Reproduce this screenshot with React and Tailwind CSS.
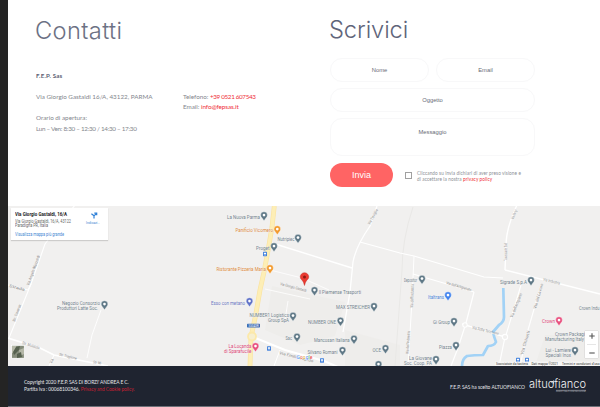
const GREY = '#5f7886';

const places = [
  { x: 264, y: 216, lines: [['La Nuova Parma', 227, 260, 218.5]] },
  { x: 277.3, y: 230, c: '#f29a2e', t: '#dd8a3c', lines: [['Panificio Vicomero', 235.5, 273, 232.2]] },
  { x: 298, y: 238.5, lines: [['Nutripiec', 277.5, 294.5, 241]] },
  { x: 274, y: 247, lines: [['Proget', 256, 269.5, 249.5]] },
  { x: 270, y: 269, c: '#f29a2e', t: '#dd8a3c', lines: [['Ristorante Pizzeria Maria', 216.5, 266, 270.5]] },
  { x: 314.5, y: 291, lines: [['Il Piemense Trasporti', 318.7, 361, 293.5]] },
  { x: 249.5, y: 302, c: '#5f72c8', t: '#6b78c0', lines: [['Esso con metano', 211, 245, 304.7]] },
  { x: 293, y: 316.5, lines: [['NUMBER1 Logistics', 249.5, 289, 317], ['Group SpA', 268, 289, 321.8]] },
  { x: 340.5, y: 321.5, lines: [['NUMBER ONE', 308, 336, 323.8]] },
  { x: 374, y: 307, lines: [['MAX STREICHER', 336, 370, 309]] },
  { x: 297, y: 337.5, lines: [['Sac', 285.5, 292, 340.2]] },
  { x: 354, y: 339.5, lines: [['Mancosan Italiana', 314, 349.7, 342.2]] },
  { x: 342.5, y: 351, lines: [['Silvano Romani', 307.5, 337.5, 353.8]] },
  { x: 385.5, y: 349, lines: [['OCE', 372.5, 381, 351.7]] },
  { x: 255.5, y: 347, c: '#e8517f', t: '#dc4476', lines: [['La Locanda', 228.5, 251.3, 348.3], ['di Sparafucile', 224, 251.5, 353]] },
  { x: 378.5, y: 365, lines: [] },
  { x: 422, y: 279.5, lines: [['Depositor', 404, 417, 282]] },
  { x: 531, y: 281, lines: [['Sigrade S.p.A', 500, 527, 283.8]] },
  { x: 448, y: 296, c: '#4384ee', t: '#4b87d8', lines: [['Italtrans', 428, 444, 298.7]] },
  { x: 454, y: 322, lines: [['Gi Group', 433, 450, 324.3]] },
  { x: 456, y: 346, lines: [['Piazza', 439, 452, 348.7]] },
  { x: 436, y: 360, lines: [['La Giovane', 409, 432, 360], ['Soc. Coop. PA', 404, 432, 364.5]] },
  { x: 559, y: 321, c: '#e8517f', t: '#dc4476', lines: [['Crown', 542, 555, 323.3]] },
  { x: 575, y: 351, lines: [['Lui - Lamiere', 545.5, 571, 352], ['Speciali Inox', 545.5, 571, 356.6]] },
  { x: 104.5, y: 305, lines: [['Negozio Consorzio', 62, 100, 305], ['Produttori Latte Soc.', 57, 98, 309.8]] },
];

const roads = [
  ['M75 205 L45 244 L31 284 L9 338', 1.1],
  ['M8 285 L28 290 L31 284', 1.2],
  ['M8 338 L40 348 L54 355 L108 366', 1.7],
  ['M54 355 L49 366', 1],
  ['M101 310 L92 335 L87 358', 0.9],
  ['M272 243 L352 268', 1.4],
  ['M377 206 L370 226 Q356 246 353 262 L350 292 L343 332', 1.3],
  ['M360 242 L400 253 L414 256 L484 277 L503 278', 1.2],
  ['M414 256 L412 300 L408 366', 1],
  ['M413 274 L474 292', 1.2],
  ['M474 292 L466 323 L458 348 L451 366', 1.2],
  ['M462 324 L505 337 L499 366', 1.2],
  ['M517 205 Q506 228 506 246 L505 270', 1.4],
  ['M505 270 L600 294', 1.4],
  ['M521 285 L506 335', 1.1],
  ['M541 285 L528 330 L520 366', 1.1],
  ['M253 337 L285 350 L324 361 L345 370', 2],
  ['M265 289 L310 299 M288 301 L285 320', 0.8],
  ['M280 350 L274 366', 1],
  ['M270 270 L302 278 L329 290', 0.8],
];

const streetNames = [
  ['Via Angelo Mazzoldi', 29, 286, -70, 32],
  ['Strada', 9, 287, 14, 16],
  ['Str. Traversa', 15, 322, -70, 18],
  ['Str. Moletolo', 22, 344, 17, 18],
  ['Str. Traglione', 59, 355.5, 14, 18],
  ['Str. Mi', 93, 363.2, 10, 8],
  ['Via', 52, 364, -70, 5],
  ['Via Treviglio', 370, 225, -62, 17],
  ['Via Giorgio Gastaldi', 280, 285, 15, 27],
  ['Via Emilio Lepido', 279, 354, 14, 35],
  ['Via Parigi', 513.5, 219.5, -68, 10],
  ['Traversante Sud', 507, 261, -90, 18],
  ['Via dell’Artigianato', 446, 284, 16, 26],
  ['Via Sofia Tecchioni', 472, 328.5, 14, 27],
  ['Via Industria', 543, 280.5, 14, 17],
  ['Via dell’Industria', 413, 308, -88, 24],
  ['Via dell’Industria', 408.5, 354, -86, 23],
  ['Via dell’Artigiano', 512.5, 318, -68, 26],
  ['Via del Lavoro', 536, 309, -74, 26],
  ['Via Ghiretti', 523, 355, -74, 25],
];

function Pin({ x, y, c = GREY }) {
  return (
    <g transform={`translate(${x} ${y})`}>
      <path d="M0 4.8 L-2 1.9 Q-3.4 .8 -3.4 -.9 A3.4 3.4 0 1 1 3.4 -.9 Q3.4 .8 2 1.9 Z" fill={c} stroke="#fff" strokeWidth=".4" />
      <circle cy="-.9" r="1.35" fill="#fff" />
    </g>
  );
}

function Bus({ x, y }) {
  return (
    <g transform={`translate(${x} ${y})`}>
      <rect x="-2" y="-2.2" width="4" height="4.4" rx=".6" fill="#3f7fdc" />
      <rect x="-1.1" y="-1.2" width="2.2" height="1.5" fill="#fff" />
      <path d="M-1 1.2h.6M.4 1.2h.6" stroke="#fff" strokeWidth=".6" />
    </g>
  );
}

function MapLabel({ text, x1, x2, y, fill, size = 5.2 }) {
  return (
    <text x={x1} y={y} textLength={x2 - x1} lengthAdjust="spacingAndGlyphs" fill={fill} fontSize={size} stroke="#f6f6f6" strokeWidth=".4" paintOrder="stroke">
      {text}
    </text>
  );
}

function MapDrawing() {
  return (
    <svg viewBox="8 206 592 160" className="block h-[160px] w-full font-['Roboto',sans-serif]">
      <rect x="8" y="206" width="592" height="160" fill="#f1f0ef" />
      <path d="M272 286 L345 302 L335 336 L300 345 L265 330Z M345 330 L400 345 V366 H345Z M545 335 H600 V366 H535Z" fill="#eeedeb" />
      <path d="M413 207 Q402 240 402 270 L395 366" fill="none" stroke="#e9e8e6" strokeWidth="1" />
      {roads.map(([d, w], i) => (
        <path key={i} d={d} fill="none" stroke="#fff" strokeWidth={w} strokeLinejoin="round" />
      ))}
      <path d="M503.3 288 L504 317 Q504 322 499 325 L493 332 Q494 337 496 342 Q494 346 488 346 L483 355 Q474 355 467 356 Q462 359 462 366" fill="none" stroke="#a2d2f6" strokeWidth="2.7" strokeLinejoin="round" />
      <path d="M462 324 L505 337" stroke="#fff" strokeWidth="1.2" />
      <circle cx="505" cy="337" r="2.6" fill="#f1f0ef" stroke="#fff" strokeWidth="1.1" />
      <circle cx="465" cy="325" r="2.2" fill="#f1f0ef" stroke="#fff" strokeWidth="1.1" />
      <path d="M274.3 206 L272 227 L268.5 248 L264 272 L260 290 L255.5 316 L251 337 L250 366" fill="none" stroke="#fae3a0" strokeWidth="4.8" />
      <path d="M274.3 206 L272 227 L268.5 248 L264 272 L260 290 L255.5 316 L251 337 L250 366" fill="none" stroke="#fdeeb6" strokeWidth="3.6" />
      <circle cx="252" cy="336.5" r="4" fill="#f7efcf" stroke="#fce9aa" strokeWidth="1.8" />
      {streetNames.map(([text, x, y, r, len], i) => (
        <text key={i} transform={`translate(${x} ${y}) rotate(${r})`} fontSize="3.9" fill="#8b8b8b" textLength={len} lengthAdjust="spacingAndGlyphs">
          {text}
        </text>
      ))}
      <rect x="247" y="323.8" width="13" height="3.6" rx=".6" fill="#3c6cb4" />
      <text x="248.5" y="326.8" fontSize="3" fill="#fff" textLength="10">SS343R</text>
      {places.map((p, i) => (
        <g key={i}>
          {p.lines.map(([t, x1, x2, y]) => (
            <MapLabel key={t} text={t} x1={x1} x2={x2} y={y} fill={p.t || '#73838c'} />
          ))}
          <Pin x={p.x} y={p.y} c={p.c} />
        </g>
      ))}
      <MapLabel text="Crown Indu" x1={579} x2={599.5} y={310.3} fill="#73838c" />
      <MapLabel text="Crown Packagi" x1={555} x2={585} y={336.3} fill="#73838c" />
      <MapLabel text="Manufacturing Italy" x1={545} x2={584} y={341.1} fill="#73838c" />
      <Bus x={265} y={254} />
      <Bus x={269} y={348.5} />
      <Bus x={322} y={360.5} />
      <Bus x={518} y={360} />
      <Bus x={527} y={360} />
      <path d="M304.5 285.5 Q303.8 281.8 301.9 280 Q300.2 278.6 300.2 277 A4.3 4.3 0 1 1 308.8 277 Q308.8 278.6 307.1 280 Q305.2 281.8 304.5 285.5Z" fill="#ea3a31" stroke="#b9271f" strokeWidth=".4" />
      <circle cx="304.5" cy="277" r="1.5" fill="#8c1a14" />
      <text x="296.5" y="359.3" fontSize="5.8" textLength="16" lengthAdjust="spacingAndGlyphs" stroke="#fff" strokeWidth=".8" paintOrder="stroke">
        <tspan fill="#4285f4">G</tspan><tspan fill="#ea4335">o</tspan><tspan fill="#d9a300">o</tspan><tspan fill="#4285f4">g</tspan><tspan fill="#34a853">l</tspan><tspan fill="#ea4335">e</tspan>
      </text>
      <rect x="495" y="361.5" width="105" height="4.5" fill="#f7f7f7" opacity=".8" />
      <g fontSize="4" fill="#333">
        <text x="496" y="364.8" textLength="32" lengthAdjust="spacingAndGlyphs">Scorciatoie da tastiera</text>
        <text x="531.5" y="364.8" textLength="26.5" lengthAdjust="spacingAndGlyphs">Dati mappa ©2021</text>
        <text x="562" y="364.8" textLength="37.5" lengthAdjust="spacingAndGlyphs">Termini e condizioni d’uso</text>
      </g>
      <g>
        <rect x="11.5" y="345.3" width="12.8" height="13" fill="#858c7b" stroke="#fff" strokeWidth=".8" />
        <path d="M12 346 L16 346 L17 351 L12 353Z M19 350 L24 348 L24 354 L20 356Z" fill="#b5b8a8" />
        <path d="M16 347 L20 346 L19 350 L14 355 L13 352Z M17 354 L21 352 L22 357 L17 358Z" fill="#56614f" />
      </g>
    </svg>
  );
}

function AddressCard() {
  return (
    <div className="absolute left-[3px] top-[2px] flex h-8 w-[97px] justify-between bg-white pl-1 pr-[7px] pt-[3px] shadow-[0_1px_1px_rgba(0,0,0,0.15)] font-['Roboto',sans-serif]">
      <svg viewBox="0 0 60 29" className="h-[29px] w-[60px] shrink-0">
        <text x="0" y="5.3" fontSize="5.4" fontWeight="700" fill="#222" textLength="52" lengthAdjust="spacingAndGlyphs">Via Giorgio Gastaldi, 16/A</text>
        <text x="0" y="11.6" fontSize="4.7" fill="#666" textLength="56" lengthAdjust="spacingAndGlyphs">Via Giorgio Gastaldi, 16/A, 43122</text>
        <text x="0" y="16.3" fontSize="4.7" fill="#666" textLength="33" lengthAdjust="spacingAndGlyphs">Paradigna PR, Italia</text>
        <text x="0" y="25.4" fontSize="4.7" fill="#3f86d2" textLength="49" lengthAdjust="spacingAndGlyphs">Visualizza mappa più grande</text>
      </svg>
      <svg viewBox="0 0 16 16" className="size-4 shrink-0">
        <path d="M9 7.5 V4.8 L11.5 2.6 M9 4.8 L6.4 2.8 M9.3 2.2 H11.7 V4.3" fill="none" stroke="#2f80d8" strokeWidth="1.2" />
        <text x="1" y="13.2" fontSize="4.4" fill="#3f86d2" textLength="14" lengthAdjust="spacingAndGlyphs">Indicazi...</text>
      </svg>
    </div>
  );
}

function Field({ children, className }) {
  return (
    <div className={`flex justify-center rounded-xl border border-[#f8f8f9] font-['Liberation_Sans',sans-serif] text-[5.8px] leading-[8px] text-[#676b76] ${className}`}>
      {children}
    </div>
  );
}

export default function App() {
  return (
    <div className="flex h-[407px] w-[600px] overflow-hidden bg-white font-['Lato',sans-serif]">
      <div className="w-2 shrink-0 bg-[#242424]" />
      <div className="flex w-[592px] flex-col">
        <main className="flex h-[206px] shrink-0">
          <section className="w-[294px] pl-7 pt-[15px] text-[6.3px] leading-[10px] text-[#83868d]">
            <h1 className="-ml-px font-['Inter',sans-serif] text-[23.7px] font-light leading-8 tracking-[0.35px] text-[#6c7184]">Contatti</h1>
            <p className="mt-[24px] text-[6.2px] font-bold tracking-[0.15px] text-[#5b6072]">F.E.P. Sas</p>
            <div className="mt-[11px] flex whitespace-nowrap">
              <div className="w-[147px] shrink-0">
                <p>Via Giorgio Gastaldi 16/A, 43122, PARMA</p>
                <p className="mt-[11px]">Orario di apertura:</p>
                <p className="mt-px tracking-[-0.28px]">Lun – Ven: 8:30 – 12:30 / 14:30 – 17:30</p>
              </div>
              <div>
                <p>Telefono: <a className="tracking-[-0.34px] text-[#ef3038]">+39 0521 607543</a></p>
                <p>Email: <a className="tracking-[-0.08px] text-[#ef3038]">info@fepsas.it</a></p>
              </div>
            </div>
          </section>
          <section className="w-[233px] pl-7 pt-[14px]">
            <h1 className="-ml-px font-['Inter',sans-serif] text-[23.7px] font-light leading-8 tracking-[-0.1px] text-[#5f657a]">Scrivici</h1>
            <form className="mt-[12px] flex flex-col gap-[6px]">
              <div className="flex gap-[7px]">
                <Field className="h-6 w-[99px] items-center">Nome</Field>
                <Field className="h-6 w-[99px] items-center">Email</Field>
              </div>
              <Field className="h-6 items-center">Oggetto</Field>
              <Field className="h-[38px] pt-[9px]">Messaggio</Field>
            </form>
            <div className="mt-[7px] flex items-center">
              <button className="h-6 w-[63px] rounded-full bg-[#ff6464] pt-px font-['Liberation_Sans',sans-serif] text-[9px] text-white">Invia</button>
              <span className="ml-3 size-[7px] shrink-0 border border-[#a0a0a0]" />
              <p className="ml-[5px] mt-0.5 whitespace-nowrap text-[4.7px] leading-[6.5px] tracking-[0.09px] text-[#8c8f96]">
                Cliccando su invia dichiari di aver preso visione e<br />
                di accettare la nostra <a className="text-[#ef3038]">privacy policy</a>
              </p>
            </div>
          </section>
        </main>
        <section className="relative h-[160px] shrink-0 overflow-hidden">
          <MapDrawing />
          <AddressCard />
          <div className="absolute right-[2px] top-[125px] flex h-[27px] w-[13px] flex-col items-center justify-around bg-white shadow-[0_0_1px_rgba(0,0,0,0.3)]">
            <svg viewBox="0 0 6 6" className="size-1.5"><path d="M3 .3v5.4M.3 3h5.4" stroke="#555" strokeWidth="1.1" /></svg>
            <span className="h-px w-[9px] bg-[#e6e6e6]" />
            <svg viewBox="0 0 6 6" className="size-1.5"><path d="M.3 3h5.4" stroke="#555" strokeWidth="1.1" /></svg>
          </div>
        </section>
        <footer className="flex h-10 shrink-0 items-center justify-between bg-[#1f2430] pl-4 pr-[13px] text-[4.9px] leading-[7px] text-[#e4e5e8]">
          <p className="whitespace-nowrap">
            <span className="tracking-[-0.1px]">Copyright 2020 F.E.P. SAS Di BORZI&apos; ANDREA E C.</span><br />
            <span className="tracking-[-0.08px]">Partita Iva : 00068100346. <a className="text-[#c51f30]">Privacy and Cookie policy.</a></span>
          </p>
          <div className="flex items-center gap-1">
            <p className="mt-0.5 whitespace-nowrap tracking-[-0.04px]">F.E.P. SAS ha scelto ALTUOFIANCO</p>
            <svg viewBox="0 0 58 16" className="h-4 w-[58px] font-['Inter',sans-serif]">
              <text x="0" y="10.4" fontSize="11" fontWeight="300" fill="#f2f2f4" textLength="57" lengthAdjust="spacingAndGlyphs">altuofianco</text>
              <path d="M22.2 4.3 L25 2.8 L24.4 5.6" fill="none" stroke="#f2f2f4" strokeWidth=".9" />
              <path d="M27 12.3 H57" stroke="#aeb1b8" strokeWidth=".5" />
              <text x="27" y="14.4" fontSize="1.8" fill="#aeb1b8" textLength="30" lengthAdjust="spacingAndGlyphs">MARKETING E COMUNICAZIONE</text>
            </svg>
          </div>
        </footer>
        <div className="h-px bg-[#6d7078]" />
      </div>
    </div>
  );
}
